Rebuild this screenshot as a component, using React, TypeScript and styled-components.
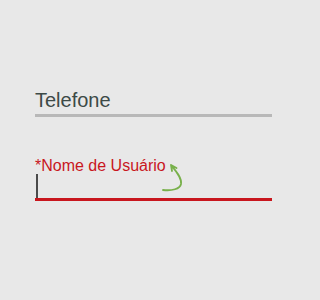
import React from 'react';
import styled, { createGlobalStyle } from 'styled-components';

const GlobalStyle = createGlobalStyle`
  html, body {
    margin: 0;
    padding: 0;
    background: #e8e8e8;
  }
  body {
    font-family: "Liberation Sans", Arial, sans-serif;
  }
`;

const Form = styled.div`
  width: 237px;
  padding: 89px 0 0 35px;
  display: flex;
  flex-direction: column;
  gap: 40px;
`;

const Field = styled.div`
  position: relative;
  display: flex;
  flex-direction: column;
`;

const Label = styled.label<{ $active?: boolean }>`
  display: block;
  font-size: ${(p) => (p.$active ? '16px' : '20px')};
  line-height: ${(p) => (p.$active ? '17px' : '23px')};
  color: ${(p) => (p.$active ? '#c8161d' : '#3d4a47')};
  margin-bottom: ${(p) => (p.$active ? '0' : '2px')};
`;

const InputArea = styled.div`
  height: 24px;
  display: flex;
  align-items: stretch;
`;

const Caret = styled.span`
  width: 2px;
  margin-left: 1px;
  background: #4a4a4a;
`;

const Underline = styled.div<{ $active?: boolean }>`
  height: 3px;
  background: ${(p) => (p.$active ? '#c8161d' : '#b8b8b8')};
`;

const Arrow = styled.svg`
  position: absolute;
  left: 125px;
  top: 4px;
  width: 24px;
  height: 34px;
  overflow: visible;
`;

export default function App() {
  return (
    <>
      <GlobalStyle />
      <Form>
        <Field>
          <Label>Telefone</Label>
          <Underline />
        </Field>
        <Field>
          <Label $active>*Nome de Usuário</Label>
          <InputArea>
            <Caret />
          </InputArea>
          <Underline $active />
          <Arrow viewBox="0 0 24 34">
            <path
              d="M11 4 C16 10, 22 17, 21 23 C20 28, 12 30, 3 29 M11 4 L16.5 7 M11 4 L12 10"
              fill="none"
              stroke="#78b04a"
              strokeWidth="1.8"
              strokeLinecap="round"
              strokeLinejoin="round"
            />
          </Arrow>
        </Field>
      </Form>
    </>
  );
}
